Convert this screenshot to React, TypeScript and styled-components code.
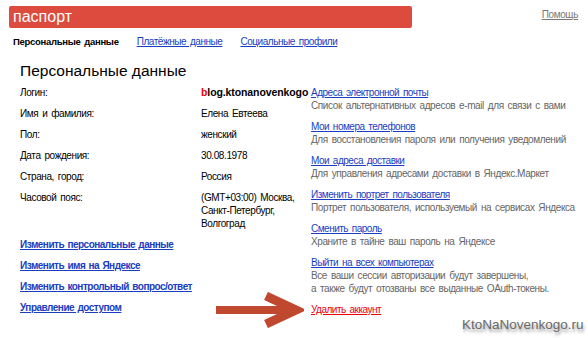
import React from 'react'
import styled, { createGlobalStyle } from 'styled-components'

const GlobalStyle = createGlobalStyle`
  body {
    margin: 0;
    background: #fff;
    font-family: 'Liberation Sans', Arial, sans-serif;
    font-size: 10px;
    letter-spacing: -0.4px;
    word-spacing: 1.5px;
    color: #000;
  }
`

const Page = styled.div`
  position: relative;
  width: 588px;
  height: 338px;
  overflow: hidden;
  padding: 6px 0 0 9px;
  box-sizing: border-box;
`

const Top = styled.div`
  display: flex;
  align-items: flex-start;
`

const Header = styled.div`
  width: 403px;
  height: 22px;
  background: #dd4b3f;
  border-radius: 2px;
  color: #fff;
  font-size: 16px;
  line-height: 21px;
  letter-spacing: 0;
  word-spacing: 0;
  padding-left: 4px;
  box-sizing: border-box;
`

const Help = styled.a`
  margin-left: auto;
  margin-right: 10px;
  margin-top: 3px;
  color: #777;
  text-decoration: underline;
`

const Tabs = styled.div`
  display: flex;
  align-items: baseline;
  gap: 18px;
  padding: 8px 0 0 4px;
  height: 14px;
`

const Tab = styled.a<{ $active?: boolean }>`
  color: ${p => (p.$active ? '#000' : '#1a3dc1')};
  font-size: ${p => (p.$active ? '9.5px' : '10px')};
  font-weight: ${p => (p.$active ? 'bold' : 'normal')};
  letter-spacing: ${p => (p.$active ? '-0.3px' : '-0.45px')};
  text-decoration: ${p => (p.$active ? 'none' : 'underline')};
`

const Title = styled.h1`
  margin: 10px 0 0 11px;
  font-size: 15.5px;
  font-weight: normal;
  line-height: 22px;
  letter-spacing: 0;
  word-spacing: 0;
`

const Columns = styled.div`
  display: flex;
  padding: 4px 0 0 11px;
`

const LeftCol = styled.div`
  width: 291px;
  flex-shrink: 0;
`

const Row = styled.div`
  display: grid;
  grid-template-columns: 181px 1fr;
  margin-bottom: 8px;
  line-height: 13px;
`

const Value = styled.div<{ $bold?: boolean }>`
  font-size: ${p => (p.$bold ? '10.5px' : '10px')};
  font-weight: ${p => (p.$bold ? 'bold' : 'normal')};
  letter-spacing: ${p => (p.$bold ? '-0.1px' : '-0.4px')};
  white-space: nowrap;
`

const RedLetter = styled.span`
  color: #e00;
`

const Actions = styled.div`
  display: flex;
  flex-direction: column;
  align-items: flex-start;
  gap: 8px;
  margin-top: 5px;
`

const ActionLink = styled.a`
  color: #1a3dc1;
  font-weight: bold;
  letter-spacing: -0.5px;
  word-spacing: 1px;
  text-decoration: underline;
  line-height: 13px;
`

const RightCol = styled.div`
  display: flex;
  flex-direction: column;
  gap: 8px;
  white-space: nowrap;
`

const Section = styled.div`
  line-height: 13px;
`

const SecLink = styled.a<{ $danger?: boolean }>`
  color: ${p => (p.$danger ? '#e00' : '#1a3dc1')};
  letter-spacing: -0.5px;
  text-decoration: underline;
  display: inline-block;
`

const Desc = styled.div`
  color: #666;
`

const Arrow = styled.svg`
  position: absolute;
  left: 216px;
  top: 292px;
`

const Watermark = styled.div`
  position: absolute;
  left: 462px;
  top: 317px;
  font-size: 13.5px;
  letter-spacing: 0;
  word-spacing: 0;
  color: #6a6a6a;
  text-shadow: 1px 3px 3px #999;
`

export default function App() {
  return (
    <>
      <GlobalStyle />
      <Page>
        <Top>
          <Header>паспорт</Header>
          <Help>Помощь</Help>
        </Top>
        <Tabs>
          <Tab $active>Персональные данные</Tab>
          <Tab>Платёжные данные</Tab>
          <Tab>Социальные профили</Tab>
        </Tabs>
        <Title>Персональные данные</Title>
        <Columns>
          <LeftCol>
            <Row>
              <div>Логин:</div>
              <Value $bold>
                <RedLetter>b</RedLetter>log.ktonanovenkogo
              </Value>
            </Row>
            <Row>
              <div>Имя и фамилия:</div>
              <Value>Елена Евтеева</Value>
            </Row>
            <Row>
              <div>Пол:</div>
              <Value>женский</Value>
            </Row>
            <Row>
              <div>Дата рождения:</div>
              <Value>30.08.1978</Value>
            </Row>
            <Row>
              <div>Страна, город:</div>
              <Value>Россия</Value>
            </Row>
            <Row>
              <div>Часовой пояс:</div>
              <Value>
                (GMT+03:00) Москва,
                <br />
                Санкт-Петербург,
                <br />
                Волгоград
              </Value>
            </Row>
            <Actions>
              <ActionLink>Изменить персональные данные</ActionLink>
              <ActionLink>Изменить имя на Яндексе</ActionLink>
              <ActionLink>Изменить контрольный вопрос/ответ</ActionLink>
              <ActionLink>Управление доступом</ActionLink>
            </Actions>
          </LeftCol>
          <RightCol>
            <Section>
              <SecLink>Адреса электронной почты</SecLink>
              <Desc>Список альтернативных адресов e-mail для связи с вами</Desc>
            </Section>
            <Section>
              <SecLink>Мои номера телефонов</SecLink>
              <Desc>Для восстановления пароля или получения уведомлений</Desc>
            </Section>
            <Section>
              <SecLink>Мои адреса доставки</SecLink>
              <Desc>Для управления адресами доставки в Яндекс.Маркет</Desc>
            </Section>
            <Section>
              <SecLink>Изменить портрет пользователя</SecLink>
              <Desc>Портрет пользователя, используемый на сервисах Яндекса</Desc>
            </Section>
            <Section>
              <SecLink>Сменить пароль</SecLink>
              <Desc>Храните в тайне ваш пароль на Яндексе</Desc>
            </Section>
            <Section>
              <SecLink>Выйти на всех компьютерах</SecLink>
              <Desc>
                Все ваши сессии авторизации будут завершены,
                <br />а также будут отозваны все выданные OAuth-токены.
              </Desc>
            </Section>
            <Section>
              <SecLink $danger>Удалить аккаунт</SecLink>
            </Section>
          </RightCol>
        </Columns>
        <Arrow width="88" height="36" viewBox="0 0 88 36">
          <path d="M0 14 H70 V22 H0 Z" fill="#c0482f" />
          <path d="M50 4 L80 18 L50 32" fill="none" stroke="#c0482f" strokeWidth="9" strokeLinejoin="miter" strokeMiterlimit="10" />
        </Arrow>
        <Watermark>KtoNaNovenkogo.ru</Watermark>
      </Page>
    </>
  )
}
